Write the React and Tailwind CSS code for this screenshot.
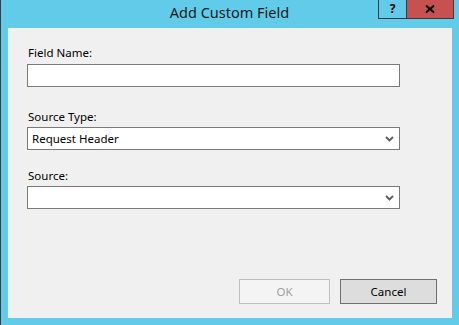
import React from "react"

const Chevron = () => (
  <svg width="9" height="6" viewBox="0 0 9 6" className="shrink-0">
    <path d="M1 1 L4.5 4.5 L8 1" fill="none" stroke="#5a5a5a" strokeWidth="1.8" />
  </svg>
)

const Field = ({ label, className, children }) => (
  <div className={`flex flex-col ${className}`}>
    <span className="text-[11.5px] leading-[16px] text-[#000] pl-px">{label}</span>
    {children}
  </div>
)

const SelectBox = ({ value }) => (
  <div className="mt-[2px] h-[23px] w-[373px] border border-[#7a7a7a] bg-white flex items-center justify-between pl-[4px] pr-[5px]">
    <span className="text-[11.5px] text-black">{value}</span>
    <Chevron />
  </div>
)

export default function App() {
  return (
    <div
      className="w-[459px] h-[325px] bg-[#63cbea] border-l border-[#3c3c3c] flex flex-col"
      style={{ fontFamily: '"Noto Sans", "Open Sans", sans-serif' }}
    >
      {/* title bar */}
      <div className="relative h-[28px] shrink-0 flex items-center justify-center">
        <span className="text-[14.5px] text-[#1b1b1b] -ml-px mt-[-2px]">Add Custom Field</span>
        <div className="absolute top-0 right-[5px] flex h-[19px] border border-t-0 border-[#3a3a3a]">
          <div className="w-[28px] flex items-center justify-center text-[12px] font-bold text-black border-r border-[#3a3a3a]">
            ?
          </div>
          <div className="w-[46px] bg-[#c75050] flex items-center justify-center">
            <svg width="10" height="8" viewBox="0 0 10 8">
              <path d="M1 0.5 L9 7.5 M9 0.5 L1 7.5" stroke="#000" strokeWidth="2" />
            </svg>
          </div>
        </div>
      </div>

      {/* body */}
      <div className="flex-1 ml-[7px] mr-[7px] mb-[7px] bg-[#f0f0f0] flex flex-col pl-[19px] pr-[15px] pb-[14px]">
        <Field label="Field Name:" className="mt-[17px]">
          <div className="mt-[3px] h-[23px] w-[373px] border border-[#7a7a7a] bg-white" />
        </Field>
        <Field label="Source Type:" className="mt-[22px]">
          <SelectBox value="Request Header" />
        </Field>
        <Field label="Source:" className="mt-[18px]">
          <SelectBox value="" />
        </Field>

        <div className="mt-auto flex justify-end gap-[10px]">
          <button className="w-[91px] h-[25px] border border-[#bfbfbf] bg-[#f4f4f4] text-[11.5px] text-[#a0a0a0]">
            OK
          </button>
          <button className="w-[97px] h-[25px] border border-[#707070] bg-[#dddddd] text-[11.5px] text-black">
            Cancel
          </button>
        </div>
      </div>
    </div>
  )
}
